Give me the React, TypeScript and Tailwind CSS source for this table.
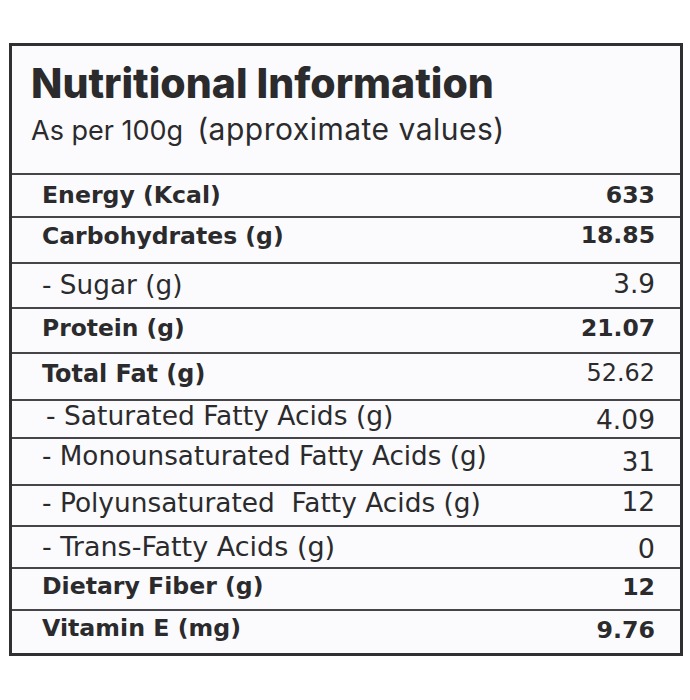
import React from "react";

type Row = {
  label: string;
  value: string;
  bold: boolean;
  valueBold: boolean;
  h: number;
  size: string;
  lp: string;
  vp: string;
  indent?: boolean;
};

const rows: Row[] = [
  { label: "Energy (Kcal)", value: "633", bold: true, valueBold: true, h: 43, size: "text-[23.6px]", lp: "pb-0", vp: "pb-0" },
  { label: "Carbohydrates (g)", value: "18.85", bold: true, valueBold: true, h: 46, size: "text-[23.5px]", lp: "pb-[6px]", vp: "pb-[8px]" },
  { label: "- Sugar (g)", value: "3.9", bold: false, valueBold: false, h: 45, size: "text-[26.3px]", lp: "pb-0", vp: "pb-[2px]" },
  { label: "Protein (g)", value: "21.07", bold: true, valueBold: true, h: 45, size: "text-[23.4px]", lp: "pb-[4px]", vp: "pb-[4px]" },
  { label: "Total Fat (g)", value: "52.62", bold: true, valueBold: false, h: 47, size: "text-[23.9px]", lp: "pb-[4px]", vp: "pb-[5px]" },
  { label: "- Saturated Fatty Acids (g)", value: "4.09", bold: false, valueBold: false, h: 38, size: "text-[26.5px]", lp: "pb-[5px]", vp: "pt-[2px]", indent: true },
  { label: "- Monounsaturated Fatty Acids (g)", value: "31", bold: false, valueBold: false, h: 47, size: "text-[26.2px]", lp: "pb-[11px]", vp: "pt-[1px]" },
  { label: "- Polyunsaturated\u00a0 Fatty Acids (g)", value: "12", bold: false, valueBold: false, h: 41, size: "text-[26.4px]", lp: "pb-[5px]", vp: "pb-[6px]" },
  { label: "- Trans-Fatty Acids (g)", value: "0", bold: false, valueBold: false, h: 42, size: "text-[27px]", lp: "pb-[2px]", vp: "pt-[2px]" },
  { label: "Dietary Fiber (g)", value: "12", bold: true, valueBold: true, h: 42, size: "text-[23.6px]", lp: "pb-[4px]", vp: "pb-[2px]" },
  { label: "Vitamin E (mg)", value: "9.76", bold: true, valueBold: true, h: 44, size: "text-[23.7px]", lp: "pb-[6px]", vp: "pb-[2px]" },
];

export default function App() {
  return (
    <div className="w-[690px] h-[700px] bg-white pt-[43px] pl-[9px] text-[#2b2b2d]">
      <div className="w-[674px] border-[3px] border-[#303032] bg-[#fbfbfd]">
        <div
          className="h-[127px] pl-[19px] pt-[13px]"
          style={{ fontFamily: "Inter, 'Noto Sans', sans-serif" }}
        >
          <div className="text-[41px] leading-[48px] font-extrabold">Nutritional Information</div>
          <div className="mt-[4px] flex items-baseline">
            <span className="text-[27px] leading-[36px]">As per 100g</span>
            <span className="ml-[14px] text-[30px] leading-[36px] tracking-[0.5px]">(approximate values)</span>
          </div>
        </div>
        <div style={{ fontFamily: "'DejaVu Sans', Verdana, sans-serif" }}>
          {rows.map((r) => (
            <div
              key={r.label}
              className={"flex items-center justify-between border-t-2 border-[#46464a] pl-[30px] pr-[25px] " + r.size}
              style={{ height: r.h }}
            >
              <span
                className={
                  "leading-none whitespace-pre " +
                  r.lp +
                  (r.bold ? " font-bold" : " font-normal") +
                  (r.indent ? " pl-[4px]" : "")
                }
              >
                {r.label}
              </span>
              <span className={"leading-none " + r.vp + (r.valueBold ? " font-bold" : " font-normal")}>
                {r.value}
              </span>
            </div>
          ))}
        </div>
      </div>
    </div>
  );
}
